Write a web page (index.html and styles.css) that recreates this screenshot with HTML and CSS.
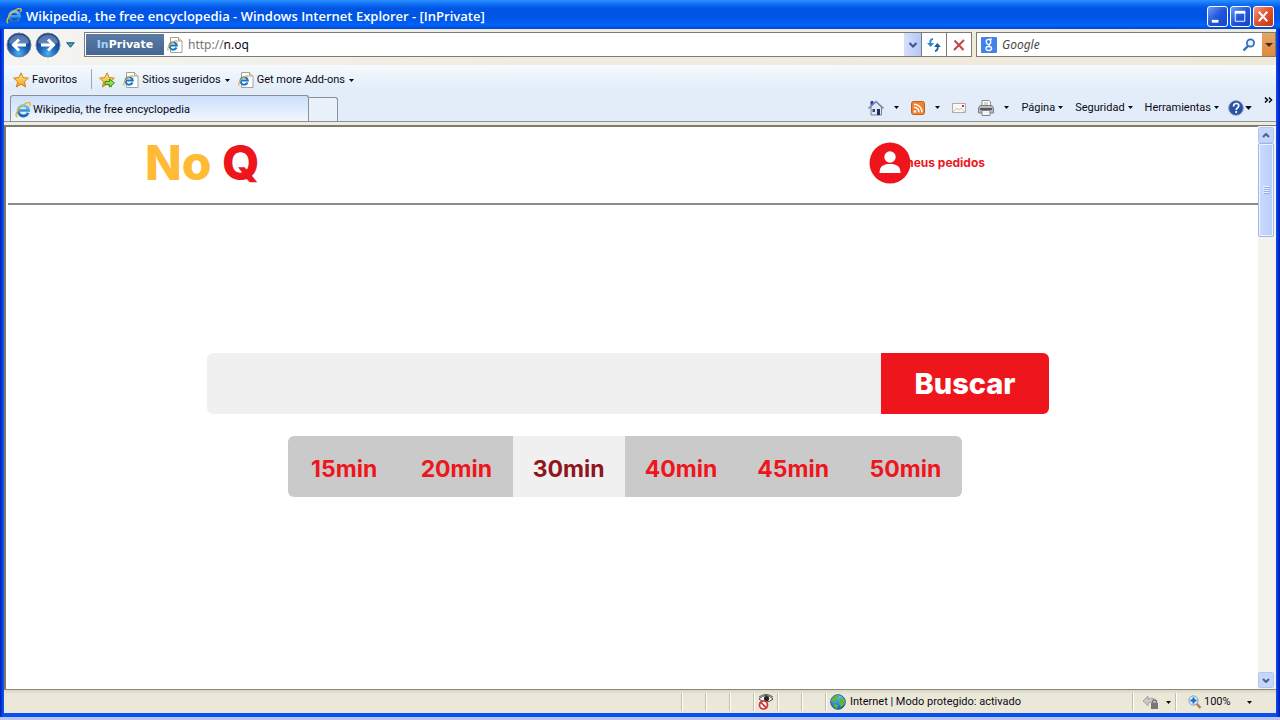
FILE: index.html
```html
<!DOCTYPE html>
<html lang="es">
<head>
<meta charset="utf-8">
<title>No Q</title>
<link rel="stylesheet" href="styles.css">
</head>
<body>
<svg class="sprite" aria-hidden="true">
  <defs>
    <radialGradient id="orb" cx="50%" cy="85%" r="85%"><stop offset="0" stop-color="#48b4f4"/><stop offset=".4" stop-color="#1c62b8"/><stop offset="1" stop-color="#0b2a72"/></radialGradient>
    <linearGradient id="gold" x2="0" y2="1"><stop offset="0" stop-color="#fff09a"/><stop offset="1" stop-color="#f59a12"/></linearGradient>
    <linearGradient id="sea" x2="0" y2="1"><stop offset="0" stop-color="#6cc6f2"/><stop offset="1" stop-color="#1565ba"/></linearGradient>
  </defs>
  <symbol id="ie" viewBox="0 0 16 16">
    <path d="M13.200 10.800A5.200 5.200 0 1 1 13.600 8.400H4" fill="none" stroke="url(#sea)" stroke-width="2.900"/>
    <path d="M2.200 15C-.4 13.800 2 8.500 6 4.600S14-.2 15 1.200c.5.700 0 2-.7 3" fill="none" stroke="#e9b62f" stroke-width="1.400"/>
  </symbol>
  <symbol id="page" viewBox="0 0 16 16">
    <path d="M3.500.5h8l3.500 3.500v11.500H3.500z" fill="#fff" stroke="#a6a294"/><path d="M11.500.5V4H15" fill="#e6e3d6" stroke="#a6a294"/>
    <path d="M9.500 10.500A3.700 3.700 0 1 1 9.800 8.500H3.500" fill="none" stroke="#1875c5" stroke-width="2"/>
    <path d="M1.300 13.500C-.5 12 3 6 7 4.300c2-1 3.500-.6 3 .9" fill="none" stroke="#e0b040" stroke-width="1.200"/>
  </symbol>
  <symbol id="star" viewBox="0 0 16 16"><path d="M8 .8l2.100 4.800 5.300.5-4 3.600 1.200 5.300L8 12.200 3.400 15l1.200-5.300-4-3.600 5.300-.5z" fill="url(#gold)" stroke="#d08518"/></symbol>
  <symbol id="caret" viewBox="0 0 5 3"><path d="M0 0h5L2.500 3z" fill="currentColor"/></symbol>
</svg>

<div class="window">
  <header class="titlebar">
    <svg class="i16"><use href="#ie"/></svg>
    <h1 class="title">Wikipedia, the free encyclopedia - Windows Internet Explorer - [InPrivate]</h1>
    <div class="controls">
      <button class="ctl" aria-label="Minimizar"><svg viewBox="0 0 20 20"><path d="M4 15h7" stroke="#fff" stroke-width="3"/></svg></button>
      <button class="ctl" aria-label="Maximizar"><svg viewBox="0 0 20 20"><path d="M4.500 5v10h10V5z" fill="none" stroke="#fff"/><path d="M4 5.500h11" stroke="#fff" stroke-width="3"/></svg></button>
      <button class="ctl close" aria-label="Cerrar"><svg viewBox="0 0 20 20"><path d="M5 5l9 10M14 5L5 15" stroke="#fff" stroke-width="2"/></svg></button>
    </div>
  </header>

  <form class="addressbar">
    <button class="nav" type="button" aria-label="Atrás"><svg viewBox="0 0 26 26"><circle cx="13" cy="13" r="12" fill="url(#orb)" stroke="#71819e"/><path d="M3 11a10 8.500 0 0 1 20 0q-10 4-20 0" fill="#fff" opacity=".3"/><path d="M20 13H8M13 7.500L7.500 13l5.500 5.500" fill="none" stroke="#fff" stroke-width="3"/></svg></button>
    <button class="nav" type="button" aria-label="Adelante"><svg viewBox="0 0 26 26"><circle cx="13" cy="13" r="12" fill="url(#orb)" stroke="#71819e"/><path d="M3 11a10 8.500 0 0 1 20 0q-10 4-20 0" fill="#fff" opacity=".3"/><path d="M6 13h12M13 7.500l5.500 5.500-5.500 5.500" fill="none" stroke="#fff" stroke-width="3"/></svg></button>
    <button class="history" type="button" aria-label="Historial"><svg viewBox="0 0 10 6"><path d="M.8.500h8.400L5 5.500z" fill="#38a8cc" stroke="#164168"/></svg></button>
    <div class="address">
      <span class="inprivate"><span class="in">In</span>Private</span>
      <svg class="i16"><use href="#page"/></svg>
      <div class="url" contenteditable="true" role="textbox" aria-label="Dirección"><span class="scheme">http://</span>n.oq</div>
      <button class="drop" type="button" aria-label="Direcciones"><svg viewBox="0 0 10 6"><path d="M1.500 1L5 4.500 8.500 1" fill="none" stroke="#3c5488" stroke-width="2"/></svg></button>
    </div>
    <button class="square" type="button" aria-label="Actualizar"><svg viewBox="0 0 16 16"><path d="M7 2Q3.500 2.500 4.500 7" fill="none" stroke="#2c86ca" stroke-width="1.800"/><path d="M1 6h7l-3.300 4z" fill="#2c86ca"/><path d="M9 14q3.500-.5 2.500-5.500" fill="none" stroke="#1e5c9c" stroke-width="1.800"/><path d="M8 10h7l-3.700-4z" fill="#1e5c9c"/></svg></button>
    <button class="square" type="button" aria-label="Detener"><svg viewBox="0 0 16 16"><path d="M3.500 3.500l9 9.500M13 3L3 13" stroke="#c24545" stroke-width="2"/></svg></button>
    <div class="search">
      <svg class="i16" viewBox="0 0 16 16"><rect width="16" height="16" rx="1" fill="#4283ea"/><g fill="none" stroke="#fff" stroke-width="1.300"><ellipse cx="7.500" cy="4.800" rx="2.300" ry="2.500"/><path d="M8 2.200h3M9 7q-2 1 0 2.500"/><ellipse cx="7.800" cy="11.500" rx="2.800" ry="2"/></g></svg>
      <input type="search" placeholder="Google" aria-label="Buscar con Google">
      <button type="button" class="lens" aria-label="Buscar"><svg viewBox="0 0 14 14"><circle cx="8.500" cy="5" r="3.600" fill="#e4f3ff" stroke="#3470bc" stroke-width="1.800"/><path d="M6 8l-4.500 4.500" stroke="#3470bc" stroke-width="2.400"/></svg></button>
      <button type="button" class="provider" aria-label="Proveedores"><svg viewBox="0 0 8 4"><path d="M0 0h8L4 4z" fill="#4b2a0e"/></svg></button>
    </div>
  </form>

  <nav class="favorites">
    <button class="tool"><svg class="i16"><use href="#star"/></svg><span>Favoritos</span></button>
    <span class="divider"></span>
    <button class="tool" aria-label="Agregar a favoritos"><svg class="i16" viewBox="0 0 16 16"><use href="#star"/><path d="M6 9.500h4.500V7L15.500 11l-5 4v-2.500H6z" fill="#8be04c" stroke="#2f9418"/></svg></button>
    <button class="tool"><svg class="i16"><use href="#page"/></svg><span>Sitios sugeridos</span><svg class="caret"><use href="#caret"/></svg></button>
    <button class="tool"><svg class="i16"><use href="#page"/></svg><span>Get more Add-ons</span><svg class="caret"><use href="#caret"/></svg></button>
  </nav>

  <div class="tabrow">
    <button class="tab"><svg class="i16"><use href="#ie"/></svg><span>Wikipedia, the free encyclopedia</span></button>
    <button class="newtab" aria-label="Nueva pestaña"></button>
    <div class="commands">
      <button class="cmd" aria-label="Inicio"><svg class="i16" viewBox="0 0 16 16"><path d="M3 7v8h10.500V7L8 2z" fill="#e2e6f0" stroke="#71809c"/><path d="M3 5V1.500h2V4" fill="#3744b0" stroke="#2834a0"/><path d="M.5 8.500L8 1.500l7.500 7" fill="none" stroke="#778bae" stroke-width="1.600"/><path d="M4.500 9h2.500v3H4.500z" fill="#3b4872"/><path d="M9 9h3v6H9z" fill="#1d315c"/></svg><svg class="caret"><use href="#caret"/></svg></button>
      <button class="cmd" aria-label="Fuentes"><svg class="i14" viewBox="0 0 14 14"><rect x=".5" y=".5" width="13" height="13" rx="2" fill="#f08231" stroke="#c45e14"/><circle cx="4" cy="10.500" r="1.300" fill="#fff"/><path d="M3 6.300a5 5 0 0 1 5 5M3 3.200a8 8 0 0 1 8 8" fill="none" stroke="#fff" stroke-width="1.500"/></svg><svg class="caret"><use href="#caret"/></svg></button>
      <button class="cmd mail" aria-label="Leer correo"><svg class="i14" viewBox="0 0 14 10"><path d="M.5.500h13v9H.5z" fill="#faf8f5" stroke="#b3aaa7"/><path d="M1 9l4-4 2 2 2-2 4 4" fill="none" stroke="#cac3bd"/><path d="M10 2h2v2h-2z" fill="#d03434"/></svg></button>
      <button class="cmd" aria-label="Imprimir"><svg class="i16" viewBox="0 0 16 16"><path d="M4 6V.5h7L12.500 2v4" fill="#fff" stroke="#8b8b8b"/><path d="M6 3h4M6 5h4" stroke="#aaa"/><path d="M2 5.500h12L15.500 8v5H.5V8z" fill="#b7b9bd" stroke="#7c7f85"/><path d="M2 9h12" stroke="#555961" stroke-width="2"/><path d="M4 10.500h8v5H4z" fill="#f2f4f5" stroke="#80848a"/></svg><svg class="caret"><use href="#caret"/></svg></button>
      <button class="cmd text">Página<svg class="caret"><use href="#caret"/></svg></button>
      <button class="cmd text">Seguridad<svg class="caret"><use href="#caret"/></svg></button>
      <button class="cmd text">Herramientas<svg class="caret"><use href="#caret"/></svg></button>
      <button class="cmd help" aria-label="Ayuda"><svg class="i16" viewBox="0 0 16 16"><circle cx="8" cy="8" r="7.300" fill="#2852a5" stroke="#8696b9"/><path d="M5.500 6.500q0-3 2.800-3 2.500 0 2.500 2.200c0 1.800-2.600 2-2.600 4.300M8.200 11v2" fill="none" stroke="#fff" stroke-width="1.700"/></svg><svg class="caret wide" viewBox="0 0 5 3"><use href="#caret"/></svg></button>
      <button class="overflow" aria-label="Más"><svg viewBox="0 0 9 6"><path d="M1 .5L3.500 3 1 5.500M5 .5L7.500 3 5 5.500" fill="none" stroke="#000" stroke-width="1.500"/></svg></button>
    </div>
  </div>

  <div class="viewport">
    <main class="site">
      <header class="sitehead">
        <a class="logo" href="#"><span class="no">No</span> <span class="q">Q</span></a>
        <a class="orders" href="#">meus pedidos
          <svg class="avatar" viewBox="0 0 42 42" aria-hidden="true"><circle cx="21" cy="21" r="20.500" fill="#ee161c"/><circle cx="21" cy="15" r="5.700" fill="#fff"/><path d="M10.500 31c0-6.500 3.500-9 10.500-9s10.500 2.500 10.500 9z" fill="#fff"/></svg>
        </a>
      </header>
      <section class="finder">
        <form class="query">
          <input type="text" aria-label="Buscar">
          <button type="button">Buscar</button>
        </form>
        <div class="times" role="group" aria-label="Tiempo">
          <button aria-pressed="false">15min</button>
          <button aria-pressed="false">20min</button>
          <button aria-pressed="true">30min</button>
          <button aria-pressed="false">40min</button>
          <button aria-pressed="false">45min</button>
          <button aria-pressed="false">50min</button>
        </div>
      </section>
    </main>
    <div class="scroll">
      <button aria-label="Subir"><svg viewBox="0 0 8 5"><path d="M1 4l3-3 3 3" fill="none" stroke="#4d6185" stroke-width="2"/></svg></button>
      <div class="track"><div class="thumb"><svg viewBox="0 0 7 8"><path d="M0 .5h6M0 2.500h6M0 4.500h6M0 6.500h6" stroke="#eef4fe"/><path d="M1 1.500h6M1 3.500h6M1 5.500h6M1 7.500h6" stroke="#8cb0f8"/></svg></div></div>
      <button aria-label="Bajar"><svg viewBox="0 0 8 5"><path d="M1 1l3 3 3-3" fill="none" stroke="#4d6185" stroke-width="2"/></svg></button>
    </div>
  </div>

  <footer class="status">
    <span class="cell"></span><span class="cell"></span><span class="cell"></span>
    <span class="cell"><svg class="i16" viewBox="0 0 16 16"><path d="M1 5q7-7 14 0-7 6-14 0z" fill="#fff" stroke="#444"/><circle cx="8.500" cy="4.500" r="2.600" fill="#222"/><path d="M1 3q7-5 14 0" fill="none" stroke="#555"/><circle cx="5.500" cy="11" r="4" fill="#fff" stroke="#cf3038" stroke-width="1.700"/><path d="M2.700 8.200l5.600 5.600" stroke="#cf3038" stroke-width="1.700"/></svg></span>
    <span class="cell"></span><span class="cell"></span>
    <span class="cell zone"><svg class="i16" viewBox="0 0 16 16"><circle cx="8" cy="8" r="7.300" fill="url(#sea)" stroke="#24568e"/><path d="M3 3q4-3 6-1L7 5 5 8 1 7zM10 4l4 1 1 4-4 4-2-4zM4 10l4 1-1 4-3-2z" fill="#5bb83b"/></svg><span>Internet | Modo protegido: activado</span></span>
    <span class="cell lock"><svg class="i16" viewBox="0 0 16 16"><path d="M0 7l5-5v3q8-3 9 5-3-3-9-1v3z" fill="#c8c8c4" stroke="#a2a29e"/><path d="M8 9h7v6H8z" fill="#777"/><path d="M9.500 9V7q2-2 4 0v2" fill="none" stroke="#777" stroke-width="1.300"/></svg><svg class="caret"><use href="#caret"/></svg></span>
    <button class="cell zoom"><svg class="i14" viewBox="0 0 14 14"><path d="M8 8l4.500 5" stroke="#b9794a" stroke-width="2.400"/><circle cx="5.500" cy="5.500" r="4.600" fill="#dff1ff" stroke="#6a9ccc"/><path d="M5.500 2.500v6M2.500 5.500h6" stroke="#1a65b8" stroke-width="2"/></svg><span>100%</span><svg class="caret"><use href="#caret"/></svg></button>
  </footer>
</div>
</body>
</html>
```

FILE: styles.css
```css
* { box-sizing: border-box; }
body {
  margin: 0;
  background: #b9c6f0;
  font-family: Roboto, Tahoma, sans-serif;
  font-size: 11px;
  line-height: 16px;
  color: #0a0a14;
}
button, input { font: inherit; color: inherit; margin: 0; padding: 0; border: 0; background: none; }
button { display: flex; align-items: center; }
svg { display: block; flex: none; }
a { text-decoration: none; }
.sprite { position: absolute; width: 0; height: 0; }
.i16 { width: 16px; height: 16px; }
.i14 { width: 14px; height: 14px; }
.caret { width: 5px; height: 3px; }
.caret.wide { width: 7px; height: 4px; }

.window { display: flex; flex-direction: column; min-height: calc(100vh - 3px); padding-bottom: 4px; background: linear-gradient(90deg, #0018b8 0, #0a50ee 3px, #0a50ee 4px, #0a50ee calc(100% - 4px), #0018b8 100%); }
.titlebar {
  display: flex; align-items: center; height: 29px; padding: 3px 6px 0; gap: 4px;
  background: linear-gradient(#2f8fff 0, #1479f8 3px, #0055e5 8px, #0054e3 18px, #0363fb 25px, #0048d0 29px);
}
.title { flex: 1; margin: 0; font-size: 13px; line-height: 18px; font-weight: 600; color: #fff; white-space: nowrap; font-family: "Open Sans", "Trebuchet MS", sans-serif; }
.controls { display: flex; gap: 2px; }
.ctl { width: 21px; height: 21px; border: 1px solid #fff; border-radius: 3px; background: linear-gradient(135deg, #6f9cf8, #1f56dc 50%, #1746c8); }
.ctl svg { width: 19px; height: 19px; }
.ctl.close { background: linear-gradient(135deg, #f09b80, #e0502c 50%, #c53410); }

.addressbar, .favorites, .tabrow, .status { margin: 0 4px; }
.addressbar { display: flex; align-items: center; height: 36px; padding: 0 0 5px 2px; background: linear-gradient(90deg, #f4f4f2, #efecdf 40%, #efe9da); }
.nav { width: 29px; height: 26px; }
.nav svg { width: 26px; height: 26px; }
.history { width: 20px; height: 20px; padding-left: 2px; }
.history svg { width: 9px; height: 6px; }
.address { display: flex; flex: 1; align-items: center; height: 25px; border: 1px solid #7c7b78; background: #fff; }
.inprivate { width: 78px; height: 21px; margin: 0 3px 0 1px; text-align: center; font: 700 11px/21px "DejaVu Sans", sans-serif; color: #fff; background: linear-gradient(#5b7ca7, #446492); }
.in { color: #a6d4f5; }
.url { flex: 1; margin-left: 5px; font-family: "Noto Sans", sans-serif; font-size: 12px; outline: 0; }
.scheme { color: #77766e; }
.drop { width: 17px; height: 23px; justify-content: center; background: linear-gradient(90deg, #d5e0fc, #b2c8f6); }
.drop svg { width: 10px; height: 6px; }
.square { width: 25px; height: 25px; justify-content: center; border: 1px solid #7c7b78; border-left: 0; background: #fff; }
.square svg { width: 16px; height: 16px; }
.search { display: flex; align-items: center; width: 300px; height: 25px; margin-left: 4px; padding-left: 4px; border: 1px solid #7c7b78; background: #fff; }
.search input { flex: 1; min-width: 0; padding-left: 5px; font-family: "Noto Sans", sans-serif; font-size: 12px; font-style: italic; outline: 0; }
.search input::placeholder { color: #4a4a4a; opacity: 1; }
.lens { width: 20px; height: 20px; }
.lens svg { width: 14px; height: 14px; }
.provider { width: 13px; height: 23px; justify-content: center; background: linear-gradient(#e5a767, #df8939); }
.provider svg { width: 8px; height: 4px; }

.favorites { display: flex; align-items: center; height: 30px; padding-left: 9px; background: linear-gradient(#f6fafe, #e2edf9 24px); }
.tool { gap: 3px; white-space: nowrap; }
.tool .caret { margin-left: 1px; }
.divider { width: 1px; height: 20px; margin: 0 7px 2px 14px; background: #9da5ad; }
.tool + .tool { margin-left: 8px; }

.tabrow { display: flex; align-items: flex-end; height: 27px; padding-left: 6px; background: #e2edf9; border-bottom: 1px solid #8b9097; }
.tab { width: 299px; height: 26px; padding: 2px 0 0 4px; gap: 2px; border: 1px solid #8b9097; border-bottom: 0; border-radius: 3px 3px 0 0; background: linear-gradient(#cbdffa, #f1f6fd); }
.newtab { width: 29px; height: 24px; border: 1px solid #8b9097; border-left: 0; border-bottom: 0; border-radius: 0 3px 0 0; background: #e9f1fb; }
.commands { display: flex; align-items: center; height: 26px; padding-bottom: 1px; margin-left: auto; }
.cmd { gap: 10px; margin-right: 12px; }
.mail .i14 { height: 10px; }
.cmd.text { gap: 3px; }
.cmd.text + .help { gap: 1px; margin-left: -3px; }
.overflow { align-self: flex-start; height: 10px; padding-right: 3px; }
.overflow svg { width: 9px; height: 6px; }

.viewport { display: flex; flex: 1; margin: 0 4px; padding-top: 3px; background: #eeece1; }
.site { flex: 1; border: solid #7e7b6e; border-width: 2px 0 0 2px; background: #fff; padding-left: 2px; font-family: Inter, sans-serif; font-weight: 700; }
.sitehead { display: flex; align-items: center; justify-content: space-between; height: 78px; padding: 0 273px 4px 137px; border-bottom: 2px solid #8b8b8b; }
.logo { font-size: 48px; line-height: 60px; font-weight: 800; }
.no { color: #ffbb35; }
.q { color: #ee161c; }
.orders { position: relative; font-size: 12px; color: #ee161c; white-space: nowrap; }
.avatar { position: absolute; right: 74px; top: -13px; width: 42px; height: 42px; }
.finder { width: 852px; max-width: 90%; margin: 148px auto 0; padding-right: 10px; }
.query { display: flex; height: 61px; margin: 0; }
.query input { flex: 1; min-width: 0; padding: 0 20px; font-size: 24px; background: #f0f0f0; border-radius: 6px 0 0 6px; }
.query button { width: 168px; justify-content: center; font-size: 29px; line-height: 40px; font-weight: 800; color: #fff; background: #ee161c; border-radius: 0 6px 6px 0; }
.times { display: grid; grid-template-columns: repeat(6, 1fr); width: 80%; height: 61px; margin: 22px 0 0 81px; overflow: hidden; border-radius: 6px; background: #cacaca; }
.times button { justify-content: center; padding: 4px 0 0; font-size: 23px; line-height: 32px; color: #ee161c; }
.times button[aria-pressed="true"] { color: #8e161c; background: #f0f0f0; }

.scroll { display: flex; flex-direction: column; width: 18px; padding: 1px 1px 1px 0; border-top: 1px solid #7e7b6e; background: #f4f2ec; }
.scroll button { justify-content: center; width: 16px; height: 16px; border: 1px solid #fff; border-radius: 2px; background: #c5d5fb; outline: 1px solid #b5c7ee; outline-offset: -1px; }
.scroll button svg { width: 8px; height: 5px; }
.track { flex: 1; }
.thumb { display: flex; align-items: center; justify-content: center; width: 16px; height: 94px; border: 1px solid #9eb6e8; border-radius: 2px; background: linear-gradient(90deg, #cbdafd, #bacdfa); box-shadow: inset 0 0 0 1px #edf3ff; }
.thumb svg { width: 7px; height: 8px; }

.status { display: flex; align-items: center; justify-content: flex-end; height: 24px; padding-top: 1px; border-top: 1px solid #8c897c; background: linear-gradient(#d9d5c3, #ece8d9 4px, #ece8d8); }
.cell { display: flex; align-items: center; width: 24px; height: 18px; padding-left: 4px; border-left: 1px solid #c4c0af; box-shadow: inset 1px 0 #fff; white-space: nowrap; }
.cell.zone { width: 307px; gap: 4px; }
.cell.lock { width: 43px; padding-left: 10px; gap: 7px; }
.cell.zoom { width: 101px; padding-left: 12px; gap: 2px; border: 0; border-left: 1px solid #c4c0af; }
.zoom .caret { margin-left: 14px; }
```
